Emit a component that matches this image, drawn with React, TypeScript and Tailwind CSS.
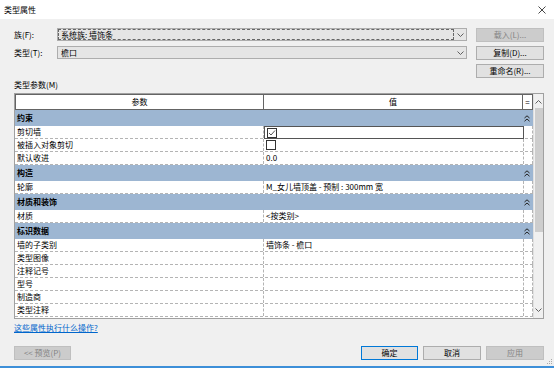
import React from 'react';

const font = 'font-["Noto_Sans_CJK_SC","Noto_Sans",sans-serif]';

type Row = { name: string; value?: string; check?: 'on' | 'off'; selected?: boolean };
type Group = { name: string; rows: Row[] };

const groups: Group[] = [
  {
    name: '约束',
    rows: [
      { name: '剪切墙', check: 'on', selected: true },
      { name: '被插入对象剪切', check: 'off' },
      { name: '默认收进', value: '0.0' },
    ],
  },
  { name: '构造', rows: [{ name: '轮廓', value: 'M_女儿墙顶盖 - 预制 : 300mm 宽' }] },
  { name: '材质和装饰', rows: [{ name: '材质', value: '<按类别>' }] },
  {
    name: '标识数据',
    rows: [
      { name: '墙的子类别', value: '墙饰条 - 檐口' },
      { name: '类型图像' },
      { name: '注释记号' },
      { name: '型号' },
      { name: '制造商' },
      { name: '类型注释' },
    ],
  },
];

function Chevron({ up = false }: { up?: boolean }) {
  return (
    <svg width="7" height="4" viewBox="0 0 7 4" className={up ? 'rotate-180' : ''}>
      <path d="M0.5 0.5 L3.5 3.5 L6.5 0.5" fill="none" stroke="#606060" strokeWidth="1" />
    </svg>
  );
}

function Collapse() {
  return (
    <svg width="6" height="7" viewBox="0 0 6 7">
      <path d="M0.5 3 L3 0.8 L5.5 3 M0.5 6.2 L3 4 L5.5 6.2" fill="none" stroke="#222" strokeWidth="1" />
    </svg>
  );
}

function CheckBox({ on }: { on: boolean }) {
  return (
    <div className="w-[10px] h-[10px] border border-[#333] bg-white flex items-center justify-center">
      {on && (
        <svg width="8" height="8" viewBox="0 0 8 8">
          <path d="M1 4 L3 6 L7 1.5" fill="none" stroke="#555" strokeWidth="1" />
        </svg>
      )}
    </div>
  );
}

function Btn({ label, disabled = false, primary = false, w = 'w-[68px]' }: { label: string; disabled?: boolean; primary?: boolean; w?: string }) {
  return (
    <div
      className={`${w} h-[14px] flex items-center justify-center border ${
        disabled
          ? 'bg-[#cccccc] border-[#bfbfbf] text-[#838383]'
          : primary
          ? 'bg-[#e1e1e1] border-[#0078d7] text-black'
          : 'bg-[#e1e1e1] border-[#adadad] text-black'
      }`}
    >
      {label}
    </div>
  );
}

function Combo({ value, focus = false }: { value: string; focus?: boolean }) {
  return (
    <div className="w-[410px] h-[13px] bg-[#e5e5e5] border border-[#adadad] flex items-center">
      <div className={`flex-1 h-[11px] flex items-center px-[2px] ${focus ? 'border border-dashed border-[#666]' : 'border border-transparent'}`}>
        {value}
      </div>
      <div className="w-[12px] flex items-center justify-center">
        <Chevron />
      </div>
    </div>
  );
}

export default function App() {
  return (
    <div className={`w-[554px] h-[368px] bg-[#f0f0f0] flex flex-col text-[8px] leading-none text-black ${font} border-b-[2px] border-[#3d8fd8] relative`}>
      <div className="h-[19px] bg-white flex items-center justify-between pl-[4px] pr-[8px] shrink-0">
        <span>类型属性</span>
        <svg width="8" height="8" viewBox="0 0 8 8">
          <path d="M0.5 0.5 L7.5 7.5 M7.5 0.5 L0.5 7.5" stroke="#333" strokeWidth="0.9" />
        </svg>
      </div>

      <div className="flex flex-col pl-[14px] pr-[10px]">
        <div className="flex items-start mt-[9px]">
          <span className="w-[43px] h-[13px] flex items-center">族(F):</span>
          <Combo value="系统族: 墙饰条" focus />
          <div className="ml-[9px]">
            <Btn label="载入(L)..." disabled />
          </div>
        </div>
        <div className="flex items-start mt-[4px]">
          <span className="w-[43px] h-[13px] flex items-center">类型(T):</span>
          <Combo value="檐口" />
          <div className="ml-[9px]">
            <Btn label="复制(D)..." />
          </div>
        </div>
        <div className="flex justify-end mt-[4px]">
          <Btn label="重命名(R)..." />
        </div>
        <div className="h-[12px] mt-[1px] flex items-center">类型参数(M)</div>

        <div className="mt-[2px] h-[226px] border border-[#a0a0a0] bg-[#f0f0f0] flex">
          <div className="w-[518px] flex flex-col bg-white">
            <div className="h-[16px] flex border border-[#646464] shrink-0">
              <div className="w-[248px] flex items-center justify-center border-r border-[#646464]">参数</div>
              <div className="w-[259px] flex items-center justify-center border-r border-[#646464]">值</div>
              <div className="flex-1 flex items-center justify-center">=</div>
            </div>
            {groups.map((g) => (
              <React.Fragment key={g.name}>
                <div className="h-[16px] bg-[#9db6d2] flex items-center justify-between pl-[2px] pr-[3px] font-bold">
                  <span>{g.name}</span>
                  <Collapse />
                </div>
                {g.rows.map((r) => (
                  <div key={r.name} className="h-[13px] flex border-b border-dashed border-[#b4b4b4]">
                    <div className="w-[249px] flex items-center pl-[2px] border-r border-dashed border-[#b4b4b4]">{r.name}</div>
                    <div
                      className={`w-[260px] flex items-center pl-[2px] ${
                        r.selected ? 'border border-[#555] -mb-px' : 'border-r border-dashed border-[#b4b4b4]'
                      }`}
                    >
                      {r.check ? <CheckBox on={r.check === 'on'} /> : r.value}
                    </div>
                    <div className="flex-1 border-r border-dashed border-[#b4b4b4]" />
                  </div>
                ))}
              </React.Fragment>
            ))}
          </div>
          <div className="flex-1 flex flex-col items-center bg-[#f0f0f0] border-l border-[#e0e0e0]">
            <div className="h-[12px] flex items-center mt-[2px]">
              <Chevron up />
            </div>
            <div className="w-[8px] h-[124px] bg-[#cdcdcd]" />
            <div className="flex-1" />
            <div className="h-[12px] flex items-center mb-[2px]">
              <Chevron />
            </div>
          </div>
        </div>

        <div className="h-[12px] mt-[3px] flex items-center">
          <span className="text-[#0066cc] underline underline-offset-1">这些属性执行什么操作?</span>
        </div>

        <div className="flex items-center mt-[12px]">
          <Btn label="<<  预览(P)" disabled w="w-[57px]" />
          <div className="flex-1" />
          <div className="flex gap-[5px]">
            <Btn label="确定" primary w="w-[57px]" />
            <Btn label="取消" w="w-[58px]" />
            <Btn label="应用" disabled w="w-[58px]" />
          </div>
        </div>
      </div>

      <svg width="6" height="6" viewBox="0 0 6 6" className="absolute right-[1px] bottom-[1px]">
        <rect x="4" y="0" width="1" height="1" fill="#aaa" />
        <rect x="2" y="2" width="1" height="1" fill="#aaa" />
        <rect x="4" y="2" width="1" height="1" fill="#aaa" />
        <rect x="0" y="4" width="1" height="1" fill="#aaa" />
        <rect x="2" y="4" width="1" height="1" fill="#aaa" />
        <rect x="4" y="4" width="1" height="1" fill="#aaa" />
      </svg>
    </div>
  );
}
